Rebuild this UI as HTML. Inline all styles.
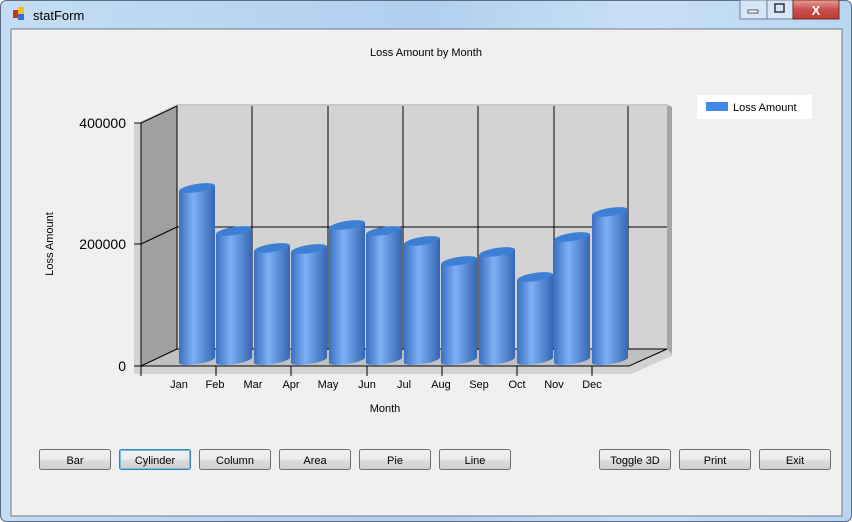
<!DOCTYPE html>
<html><head><style>
body{margin:0;width:852px;height:522px;overflow:hidden;background:#fff;font-family:"Liberation Sans",sans-serif;}
svg{display:block}
</style></head><body>
<svg width="852" height="522" viewBox="0 0 852 522" xmlns="http://www.w3.org/2000/svg" font-family="Liberation Sans, sans-serif">
<defs>
<linearGradient id="tb" x1="0" y1="0" x2="1" y2="0">
<stop offset="0" stop-color="#c4ddf5"/><stop offset="0.5" stop-color="#b0cfee"/><stop offset="0.75" stop-color="#c8e0f6"/><stop offset="1" stop-color="#b8d5f1"/></linearGradient>
<linearGradient id="cyl" x1="0" y1="0" x2="1" y2="0">
<stop offset="0" stop-color="#3b6fc0"/><stop offset="0.4" stop-color="#7db0f5"/><stop offset="1" stop-color="#3566b5"/></linearGradient>
<linearGradient id="btn" x1="0" y1="0" x2="0" y2="1">
<stop offset="0" stop-color="#f2f2f2"/><stop offset="0.5" stop-color="#ebebeb"/><stop offset="0.5" stop-color="#dddddd"/><stop offset="1" stop-color="#cfcfcf"/></linearGradient>
<linearGradient id="cls" x1="0" y1="0" x2="0" y2="1">
<stop offset="0" stop-color="#e8a090"/><stop offset="0.5" stop-color="#c75050"/><stop offset="1" stop-color="#c03a2a"/></linearGradient>
</defs>
<rect x="0" y="0" width="852" height="522" fill="url(#tb)" rx="6"/>
<rect x="0.5" y="0.5" width="851" height="521" fill="none" stroke="#5a6d85" rx="6"/>
<!-- icon -->
<rect x="13" y="10" width="6" height="8" fill="#d03020"/><rect x="18" y="7" width="6" height="7" fill="#f0c020"/><rect x="18" y="14" width="6" height="6" fill="#3070d0"/>
<text x="33" y="20" font-size="13" fill="#000">statForm</text>
<!-- window buttons -->
<rect x="740" y="0" width="27" height="19" fill="#d6e6f6" stroke="#6b7f98"/>
<rect x="748" y="10" width="10" height="3" fill="#fff" stroke="#333" stroke-width="0.8"/>
<rect x="767" y="0" width="26" height="19" fill="#d6e6f6" stroke="#6b7f98"/>
<rect x="775" y="4" width="9" height="8" fill="none" stroke="#333" stroke-width="1.5"/>
<rect x="793" y="0" width="46" height="19" fill="url(#cls)" stroke="#6b3030"/>
<text x="816" y="15" font-size="13" font-weight="bold" fill="#fff" text-anchor="middle">X</text>
<!-- client -->
<rect x="11" y="29" width="831" height="487" fill="#f0f0f0" stroke="#6e7a88"/>
<text x="426" y="56" font-size="11" text-anchor="middle" fill="#000">Loss Amount by Month</text>
<!-- chart shadows -->
<polygon points="134,125 170,107 177,104 177,350 141,374 134,374" fill="#d2d2d2"/>
<polygon points="141,366 629,366 667,349 672,352 672,356 631,374 141,374" fill="#d2d2d2"/>
<polygon points="667,104 672,107 672,354 667,349" fill="#a5a5a5"/>
<polygon points="177,104 667,104 670,106 177,106" fill="#c8c8c8"/>
<!-- walls -->
<polygon points="177,106 667,106 667,349 177,349" fill="#d3d3d3"/>
<polygon points="141,123 177,106 177,349 141,366" fill="#a0a0a0"/>
<polygon points="141,366 177,349 667,349 629,366" fill="#c0c0c0"/>
<g stroke="#000" stroke-width="1" fill="none">
<polyline points="141,366 141,123 177,106 177,349 141,366 629,366 667,349 177,349"/>
<line x1="141" y1="244" x2="177" y2="227"/><line x1="177" y1="227" x2="667" y2="227"/>
<line x1="252" y1="106" x2="252" y2="349"/><line x1="328" y1="106" x2="328" y2="349"/>
<line x1="403" y1="106" x2="403" y2="349"/><line x1="478" y1="106" x2="478" y2="349"/>
<line x1="554" y1="106" x2="554" y2="349"/><line x1="628" y1="106" x2="628" y2="349"/>
<line x1="134" y1="123" x2="141" y2="123"/><line x1="134" y1="244" x2="141" y2="244"/><line x1="134" y1="366" x2="141" y2="366"/>
<line x1="141" y1="366" x2="141" y2="376"/><line x1="216" y1="366" x2="216" y2="376"/><line x1="291" y1="366" x2="291" y2="376"/>
<line x1="367" y1="366" x2="367" y2="376"/><line x1="442" y1="366" x2="442" y2="376"/><line x1="517" y1="366" x2="517" y2="376"/><line x1="592" y1="366" x2="592" y2="376"/>
</g>
<g font-size="14" fill="#000" text-anchor="end">
<text x="126" y="128">400000</text><text x="126" y="249">200000</text><text x="126" y="371">0</text>
</g>
<text transform="translate(53,244) rotate(-90)" font-size="11" text-anchor="middle">Loss Amount</text>
<!-- cylinders -->
<g id="c">
<g fill="url(#cyl)">
<path d="M179,191 L215,185 L215,357 A18,4 -9 0 1 179,363 Z"/>
<path d="M216,234 L252,228 L252,357 A18,4 -9 0 1 216,363 Z"/>
<path d="M254,251 L290,245 L290,357 A18,4 -9 0 1 254,363 Z"/>
<path d="M291,252 L327,246 L327,357 A18,4 -9 0 1 291,363 Z"/>
<path d="M329,228 L365,222 L365,357 A18,4 -9 0 1 329,363 Z"/>
<path d="M366,234 L402,228 L402,357 A18,4 -9 0 1 366,363 Z"/>
<path d="M404,244 L440,238 L440,357 A18,4 -9 0 1 404,363 Z"/>
<path d="M441,264 L477,258 L477,357 A18,4 -9 0 1 441,363 Z"/>
<path d="M479,255 L515,249 L515,357 A18,4 -9 0 1 479,363 Z"/>
<path d="M517,280 L553,274 L553,357 A18,4 -9 0 1 517,363 Z"/>
<path d="M554,240 L590,234 L590,357 A18,4 -9 0 1 554,363 Z"/>
<path d="M592,215 L628,209 L628,357 A18,4 -9 0 1 592,363 Z"/>
</g>
<g fill="#3d7fd4">
<ellipse cx="197" cy="188" rx="18" ry="4" transform="rotate(-9 197 188)"/>
<ellipse cx="234" cy="231" rx="18" ry="4" transform="rotate(-9 234 231)"/>
<ellipse cx="272" cy="248" rx="18" ry="4" transform="rotate(-9 272 248)"/>
<ellipse cx="309" cy="249" rx="18" ry="4" transform="rotate(-9 309 249)"/>
<ellipse cx="347" cy="225" rx="18" ry="4" transform="rotate(-9 347 225)"/>
<ellipse cx="384" cy="231" rx="18" ry="4" transform="rotate(-9 384 231)"/>
<ellipse cx="422" cy="241" rx="18" ry="4" transform="rotate(-9 422 241)"/>
<ellipse cx="459" cy="261" rx="18" ry="4" transform="rotate(-9 459 261)"/>
<ellipse cx="497" cy="252" rx="18" ry="4" transform="rotate(-9 497 252)"/>
<ellipse cx="535" cy="277" rx="18" ry="4" transform="rotate(-9 535 277)"/>
<ellipse cx="572" cy="237" rx="18" ry="4" transform="rotate(-9 572 237)"/>
<ellipse cx="610" cy="212" rx="18" ry="4" transform="rotate(-9 610 212)"/>
</g>
</g>
<g font-size="11" text-anchor="middle" fill="#000">
<text x="179" y="388">Jan</text><text x="215" y="388">Feb</text><text x="253" y="388">Mar</text><text x="291" y="388">Apr</text>
<text x="328" y="388">May</text><text x="367" y="388">Jun</text><text x="404" y="388">Jul</text><text x="441" y="388">Aug</text>
<text x="479" y="388">Sep</text><text x="517" y="388">Oct</text><text x="554" y="388">Nov</text><text x="592" y="388">Dec</text>
<text x="385" y="412">Month</text>
</g>
<!-- legend -->
<rect x="697" y="95" width="115" height="24" fill="#fff"/>
<rect x="706" y="102" width="22" height="9" fill="#4189e8"/>
<text x="733" y="111" font-size="11" fill="#000">Loss Amount</text>
<!-- buttons -->
<g font-size="11" text-anchor="middle" fill="#000">
<rect x="39.5" y="449.5" width="71" height="20" rx="2" fill="url(#btn)" stroke="#707070"/><text x="75" y="464">Bar</text>
<rect x="119.5" y="449.5" width="71" height="20" rx="2" fill="url(#btn)" stroke="#3c7fb1"/><rect x="120.5" y="450.5" width="69" height="18" rx="1" fill="none" stroke="#70c0e7"/><text x="155" y="464">Cylinder</text>
<rect x="199.5" y="449.5" width="71" height="20" rx="2" fill="url(#btn)" stroke="#707070"/><text x="235" y="464">Column</text>
<rect x="279.5" y="449.5" width="71" height="20" rx="2" fill="url(#btn)" stroke="#707070"/><text x="315" y="464">Area</text>
<rect x="359.5" y="449.5" width="71" height="20" rx="2" fill="url(#btn)" stroke="#707070"/><text x="395" y="464">Pie</text>
<rect x="439.5" y="449.5" width="71" height="20" rx="2" fill="url(#btn)" stroke="#707070"/><text x="475" y="464">Line</text>
<rect x="599.5" y="449.5" width="71" height="20" rx="2" fill="url(#btn)" stroke="#707070"/><text x="635" y="464">Toggle 3D</text>
<rect x="679.5" y="449.5" width="71" height="20" rx="2" fill="url(#btn)" stroke="#707070"/><text x="715" y="464">Print</text>
<rect x="759.5" y="449.5" width="71" height="20" rx="2" fill="url(#btn)" stroke="#707070"/><text x="795" y="464">Exit</text>
</g>
</svg>
</body></html>
